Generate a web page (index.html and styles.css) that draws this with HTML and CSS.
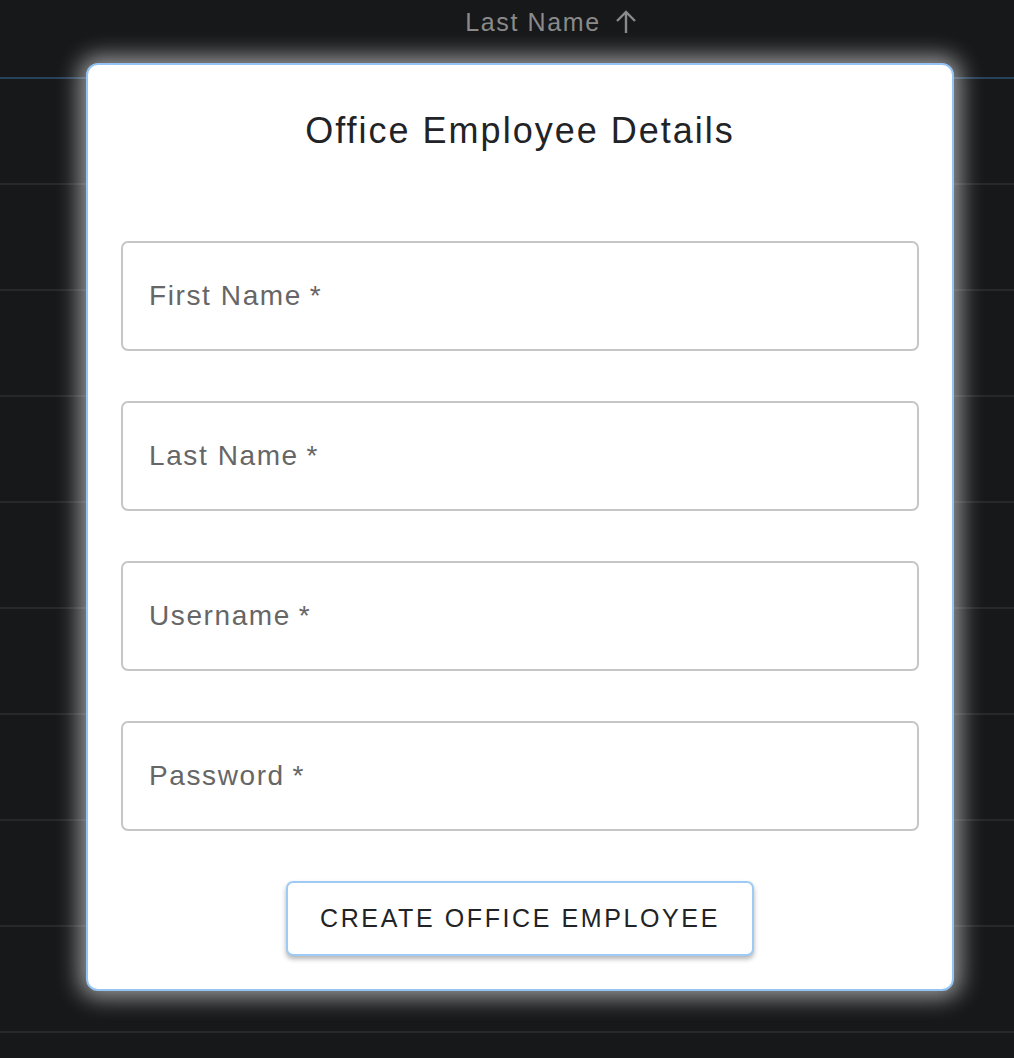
FILE: index.html
```html
<!DOCTYPE html>
<html lang="en">
<head>
<meta charset="utf-8">
<title>Office Employee Details</title>
<link rel="stylesheet" href="styles.css">
</head>
<body>
<div class="table">
  <div class="thead">
    <span class="th">Last Name
      <svg class="sort" width="26" height="26" viewBox="0 0 26 26"><path d="M13 24V3M4 12L13 3L22 12" fill="none" stroke="#8a8a8a" stroke-width="2.4"/></svg>
    </span>
  </div>
  <div class="row"></div>
  <div class="row"></div>
  <div class="row"></div>
  <div class="row"></div>
  <div class="row"></div>
  <div class="row"></div>
  <div class="row"></div>
  <div class="row"></div>
  <div class="row"></div>
</div>

<div class="modal">
  <h2 class="title">Office Employee Details</h2>
  <form class="form">
    <div class="field"><span class="label">First Name<span class="req"> *</span></span></div>
    <div class="field"><span class="label">Last Name<span class="req"> *</span></span></div>
    <div class="field"><span class="label">Username<span class="req"> *</span></span></div>
    <div class="field"><span class="label">Password<span class="req"> *</span></span></div>
    <button type="button" class="btn">CREATE OFFICE EMPLOYEE</button>
  </form>
</div>
</body>
</html>
```

FILE: styles.css
```css
html, body {
  margin: 0;
  padding: 0;
}
body {
  background: #17181a;
  font-family: "Liberation Sans", Arial, Helvetica, sans-serif;
  width: 1014px;
  height: 1058px;
  overflow: hidden;
  position: relative;
}
.table {
  display: flex;
  flex-direction: column;
}
.thead {
  height: 79px;
  border-bottom: 2px solid #29425c;
  display: flex;
  justify-content: center;
  align-items: flex-start;
  box-sizing: border-box;
  padding-left: 90px;
}
.th {
  color: #8a8a8a;
  font-size: 25px;
  letter-spacing: 1.6px;
  line-height: 44px;
  display: flex;
  align-items: center;
  gap: 12px;
}
.sort {
  display: block;
}
.row {
  height: 104px;
  border-bottom: 2px solid #26282b;
  flex: none;
}
.modal {
  position: absolute;
  left: 86px;
  top: 63px;
  width: 868px;
  height: 928px;
  box-sizing: border-box;
  background: #fff;
  border: 2px solid #94c4f4;
  border-radius: 12px;
  box-shadow: 0 0 22px 7px rgba(255, 255, 255, 0.55);
  padding: 44px 33px 0;
}
.title {
  margin: 0;
  text-align: center;
  font-weight: normal;
  font-size: 36px;
  letter-spacing: 2px;
  line-height: 44px;
  color: #222326;
}
.form {
  margin-top: 88px;
  display: flex;
  flex-direction: column;
  align-items: center;
  gap: 50px;
}
.field {
  width: 100%;
  height: 110px;
  box-sizing: border-box;
  border: 2px solid #c6c6c6;
  border-radius: 7px;
  display: flex;
  align-items: center;
  padding-left: 26px;
}
.label {
  color: #666;
  font-size: 28px;
  letter-spacing: 1.6px;
}
.req {
  letter-spacing: 0;
}
.btn {
  width: 468px;
  height: 75px;
  background: #fff;
  border: 2px solid #9ecbf5;
  border-radius: 7px;
  box-shadow: 0 3px 5px rgba(0, 0, 0, 0.3);
  font-family: "Liberation Sans", Arial, Helvetica, sans-serif;
  font-size: 25px;
  letter-spacing: 2.6px;
  color: #222326;
  padding: 0;
}
```
